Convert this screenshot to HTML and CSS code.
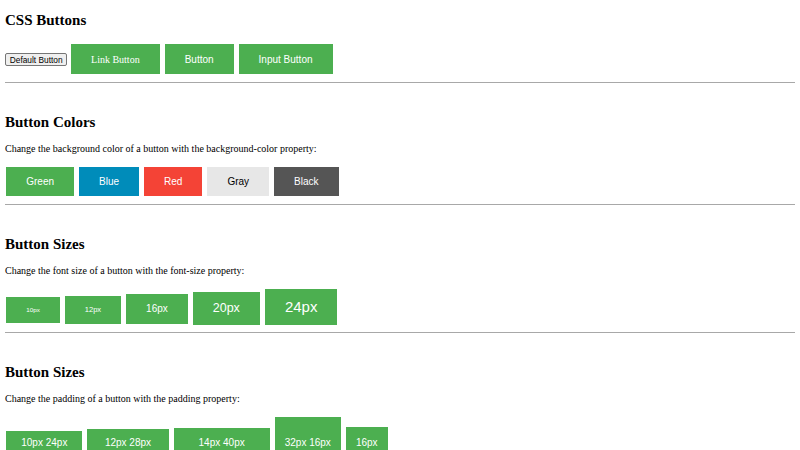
FILE: index.html
```html
<!DOCTYPE html>
<html>
<head>
<meta charset="utf-8">
<link rel="stylesheet" href="styles.css">
</head>
<body>
<h2>CSS Buttons</h2>
<button class="default-btn">Default Button</button>
<a href="#" class="btn btn-link">Link Button</a>
<button class="btn">Button</button>
<input type="button" class="btn" value="Input Button">
<hr>
<h2>Button Colors</h2>
<p>Change the background color of a button with the background-color property:</p>
<button class="btn">Green</button>
<button class="btn blue">Blue</button>
<button class="btn red">Red</button>
<button class="btn gray">Gray</button>
<button class="btn black">Black</button>
<hr>
<h2>Button Sizes</h2>
<p>Change the font size of a button with the font-size property:</p>
<button class="btn f10">10px</button>
<button class="btn f12">12px</button>
<button class="btn f16">16px</button>
<button class="btn f20">20px</button>
<button class="btn f24">24px</button>
<hr>
<h2>Button Sizes</h2>
<p>Change the padding of a button with the padding property:</p>
<button class="btn p1">10px 24px</button>
<button class="btn p2">12px 28px</button>
<button class="btn p3">14px 40px</button>
<button class="btn p4">32px 16px</button>
<button class="btn p5">16px</button>
</body>
</html>
```
FILE: styles.css
```css
body {
  margin: 0;
  padding: 0 5px;
  font-family: "Liberation Serif", "Times New Roman", serif;
  font-size: 10px;
  color: #000;
  background: #fff;
}

h2 {
  font-size: 15px;
  font-weight: bold;
  margin: 12.45px 0;
}

p {
  margin: 10px 0;
}

hr {
  border: 0;
  border-top: 1px solid #a8a8a8;
  height: 0;
  margin: 5.25px 0 30.75px;
}

.default-btn {
  font-family: "Liberation Sans", Arial, sans-serif;
  font-size: 8.333px;
  padding: 0.625px 3.75px;
  border: 1px solid #767676;
  border-radius: 2px;
  background: #efefef;
  color: #000;
  margin: 0;
}

.btn {
  background-color: #4CAF50;
  border: none;
  color: #fff;
  padding: 9.375px 20px;
  text-align: center;
  text-decoration: none;
  display: inline-block;
  font-family: "Liberation Sans", Arial, sans-serif;
  font-size: 10px;
  margin: 2.5px 1.25px;
  cursor: pointer;
}

.btn-link {
  font-family: "Liberation Serif", "Times New Roman", serif;
}

.blue { background-color: #008CBA; }
.red { background-color: #f44336; }
.gray { background-color: #e7e7e7; color: #000; }
.black { background-color: #555555; }

.f10 { font-size: 6.25px; }
.f12 { font-size: 7.5px; }
.f16 { font-size: 10px; }
.f20 { font-size: 12.5px; }
.f24 { font-size: 15px; }

.p1 { padding: 6.25px 15px; }
.p2 { padding: 7.5px 17.5px; }
.p3 { padding: 8.75px 25px; }
.p4 { padding: 20px 10px; }
.p5 { padding: 10px; }
```
